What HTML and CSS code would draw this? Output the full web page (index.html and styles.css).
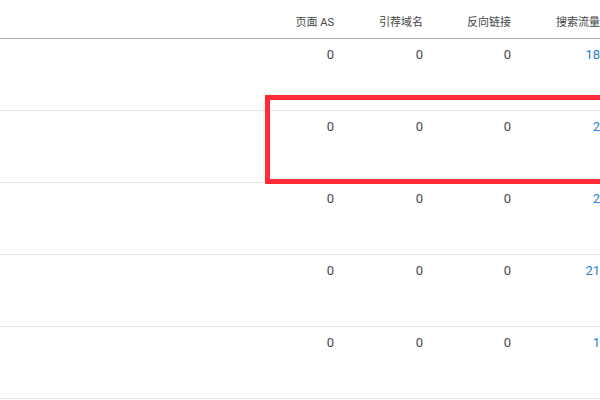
FILE: index.html
```html
<!DOCTYPE html>
<html lang="zh">
<head>
<meta charset="utf-8">
<link rel="stylesheet" href="styles.css">
</head>
<body>
<div class="page">
  <div class="table">
    <div class="row head">
      <div class="cell name"></div>
      <div class="cell">页面 AS</div>
      <div class="cell">引荐域名</div>
      <div class="cell">反向链接</div>
      <div class="cell">搜索流量</div>
    </div>
    <div class="row">
      <div class="cell name"></div>
      <div class="cell">0</div><div class="cell">0</div><div class="cell">0</div>
      <div class="cell link">18</div>
    </div>
    <div class="row">
      <div class="cell name"></div>
      <div class="cell">0</div><div class="cell">0</div><div class="cell">0</div>
      <div class="cell link">2</div>
    </div>
    <div class="row">
      <div class="cell name"></div>
      <div class="cell">0</div><div class="cell">0</div><div class="cell">0</div>
      <div class="cell link">2</div>
    </div>
    <div class="row">
      <div class="cell name"></div>
      <div class="cell">0</div><div class="cell">0</div><div class="cell">0</div>
      <div class="cell link">21</div>
    </div>
    <div class="row">
      <div class="cell name"></div>
      <div class="cell">0</div><div class="cell">0</div><div class="cell">0</div>
      <div class="cell link">1</div>
    </div>
  </div>
  <div class="highlight"></div>
</div>
</body>
</html>
```
FILE: styles.css
```css
html, body {
  margin: 0;
  padding: 0;
  background: #fff;
  overflow: hidden;
}
.page {
  position: relative;
  width: 600px;
  height: 400px;
  overflow: hidden;
  font-family: Roboto, "Noto Sans CJK SC", sans-serif;
  color: #4a4a4a;
}
.table {
  width: 600px;
}
.row {
  display: grid;
  grid-template-columns: 1fr 89px 89px 88px 89px;
  height: 71px;
  border-bottom: 1px solid #e6e6ea;
  font-size: 13px;
  line-height: 15px;
}
.row .cell {
  text-align: right;
  padding-top: 8px;
}
.row .name {
  padding: 0;
}
.row.head {
  height: 38px;
  border-bottom: 1px solid #a8a8ad;
  font-size: 11px;
  line-height: 14px;
  color: #444;
}
.row.head .cell {
  padding-top: 16px;
}
.row.head .name {
  padding: 0;
}
.link {
  color: #2f7dc8;
}
.highlight {
  position: absolute;
  left: 265px;
  top: 95px;
  width: 360px;
  height: 79px;
  border: 5px solid #ff2b36;
}
```
